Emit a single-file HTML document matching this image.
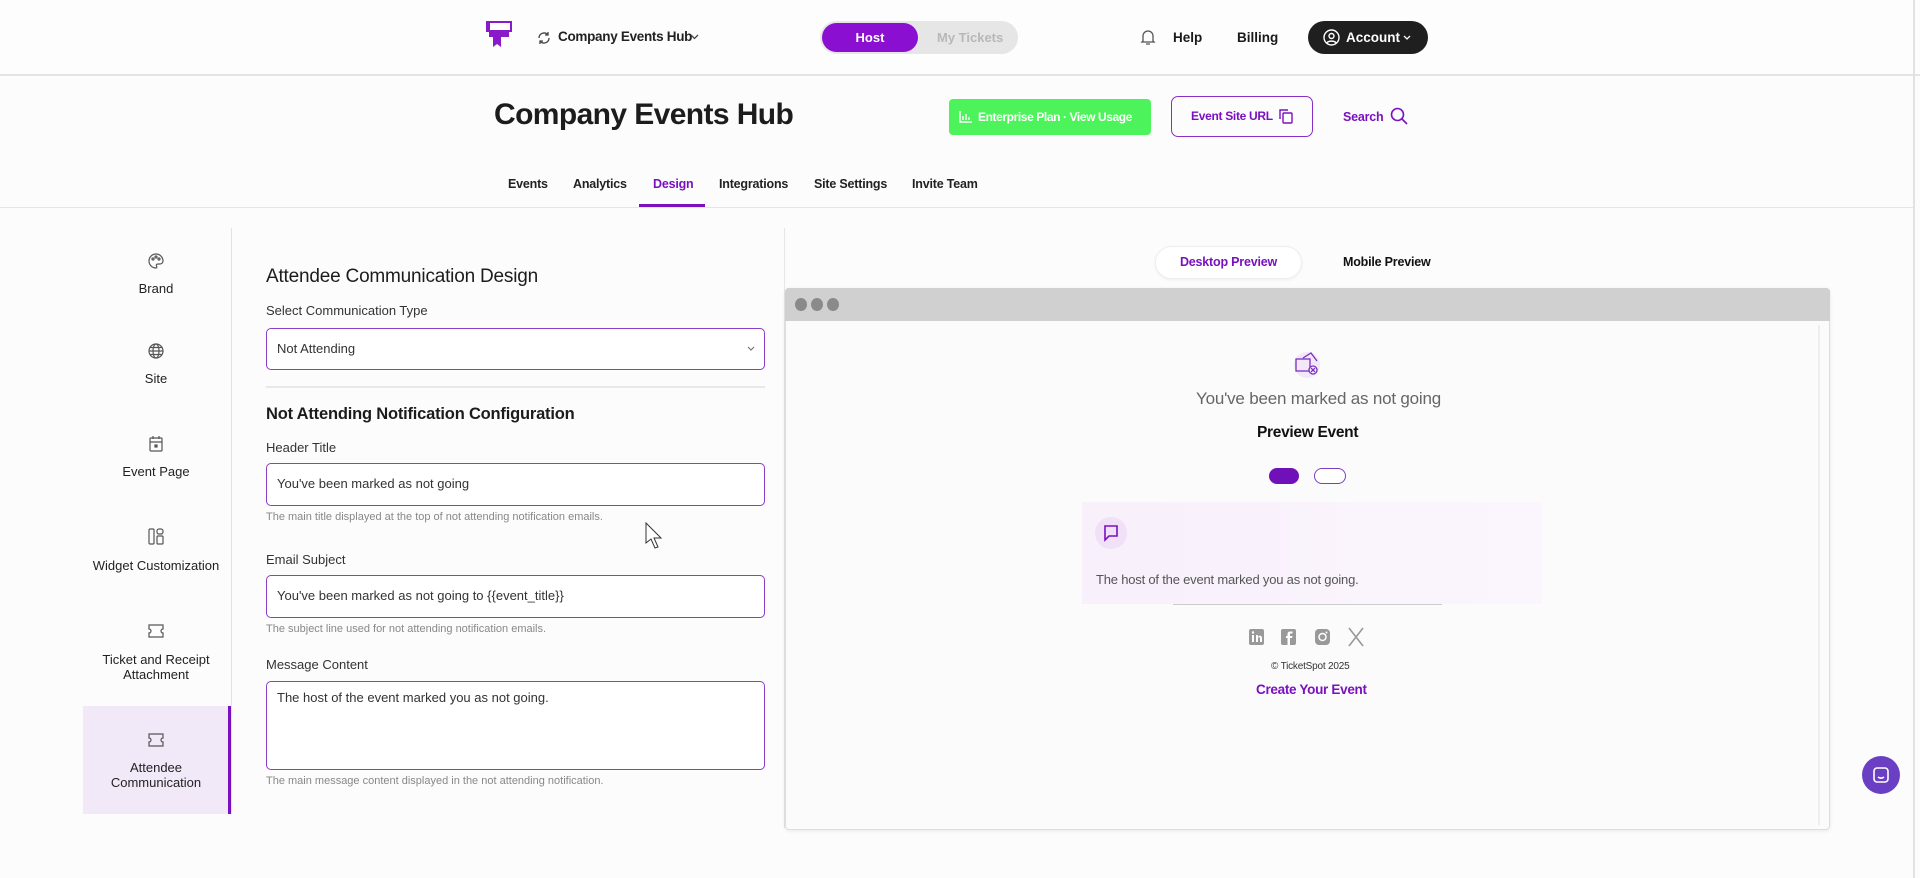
<!DOCTYPE html>
<html><head><meta charset="utf-8"><style>
*{box-sizing:border-box;margin:0;padding:0}
body{width:1920px;height:878px;background:#fcfcfc;font-family:"Liberation Sans",sans-serif;color:#1a1a1a;position:relative;overflow:hidden}
.a{position:absolute}
.t{position:absolute;white-space:nowrap}
.lbl{font-size:13px;color:#333}
.inp{position:absolute;left:266px;width:499px;border:1.5px solid #8a3fc6;border-radius:5px;background:#fff;font-size:14px;color:#333;padding-left:10px}
.help{font-size:11px;color:#888;position:absolute;left:266px}
.side{position:absolute;left:83px;width:146px;text-align:center;font-size:13px;color:#222}
.tab{position:absolute;white-space:nowrap;top:177px;font-size:12.5px;font-weight:bold;color:#222;letter-spacing:-0.2px}
</style></head><body>
<!-- top bar -->
<div class="a" style="left:0;top:0;width:1920px;height:76px;background:#fdfdfd;border-bottom:2px solid #e4e4e4"></div>
<svg class="a" style="left:486px;top:21px" width="26" height="28" viewBox="0 0 26 28"><rect x="1" y="1" width="24" height="9" fill="#fff" stroke="#8a19c9" stroke-width="2"/><rect x="1" y="1" width="3" height="9" fill="#8a19c9"/><path d="M7 10v16l4-3 4 3V10z" fill="#8a19c9"/><rect x="3" y="10" width="20" height="6" fill="#8a19c9"/></svg>
<svg class="a" style="left:537px;top:31px" width="14" height="14" viewBox="0 0 14 14" fill="none" stroke="#444" stroke-width="1.3"><path d="M2 7a5 5 0 0 1 9-3M12 7a5 5 0 0 1-9 3M11 1v3H8M3 13v-3h3"/></svg>
<div class="t" style="left:558px;top:29px;font-size:13.5px;font-weight:bold;color:#222;letter-spacing:-0.3px">Company Events Hub</div>
<svg class="a" style="left:690px;top:34px" width="9" height="6" viewBox="0 0 9 6" fill="none" stroke="#444" stroke-width="1.3"><path d="M1 1l3.5 3.5L8 1"/></svg>
<div class="a" style="left:820px;top:21px;width:198px;height:33px;border-radius:17px;background:#e6e6e6"></div>
<div class="a" style="left:822px;top:23px;width:96px;height:29px;border-radius:15px;background:#8a0fd0;color:#fff;font-size:13px;font-weight:bold;text-align:center;line-height:29px">Host</div>
<div class="t" style="left:937px;top:30px;font-size:13px;font-weight:bold;color:#b8b8b8">My Tickets</div>
<svg class="a" style="left:1140px;top:28px" width="16" height="18" viewBox="0 0 16 18" fill="none" stroke="#555" stroke-width="1.3"><path d="M3 13V8a5 5 0 0 1 10 0v5l1 1H2zM6 16h4"/></svg>
<div class="t" style="left:1173px;top:30px;font-size:13.5px;font-weight:bold">Help</div>
<div class="t" style="left:1237px;top:30px;font-size:13.5px;font-weight:bold">Billing</div>
<div class="a" style="left:1308px;top:21px;width:120px;height:33px;border-radius:17px;background:#1f1f1f;color:#fff;font-size:13.5px;font-weight:bold;line-height:33px;padding-left:38px">Account</div>
<svg class="a" style="left:1403px;top:35px" width="8" height="5" viewBox="0 0 8 5" fill="none" stroke="#fff" stroke-width="1.3"><path d="M1 1l3 3 3-3"/></svg>
<svg class="a" style="left:1323px;top:29px" width="17" height="17" viewBox="0 0 17 17" fill="none" stroke="#fff" stroke-width="1.4"><circle cx="8.5" cy="8.5" r="7.5"/><circle cx="8.5" cy="7" r="2.5"/><path d="M4 14c1-2.5 8-2.5 9 0"/></svg>
<div class="a" style="left:1913px;top:0;width:2px;height:878px;background:#e2e2e2"></div>
<!-- title row -->
<div class="t" style="left:494px;top:98px;font-size:30px;font-weight:bold;color:#1c1c1c;letter-spacing:-0.6px">Company Events Hub</div>
<div class="a" style="left:949px;top:99px;width:202px;height:36px;border-radius:4px;background:#4df35a;color:#fff;font-size:12px;font-weight:bold;line-height:36px;padding-left:29px;letter-spacing:-0.4px;white-space:nowrap">Enterprise Plan · View Usage</div>
<svg class="a" style="left:959px;top:111px" width="13" height="12" viewBox="0 0 13 12" fill="none" stroke="#fff" stroke-width="1.5"><path d="M1 0v11h12M4 9V5M7 9V3M10 9V6"/></svg>
<div class="a" style="left:1171px;top:96px;width:142px;height:41px;border-radius:7px;border:1.5px solid #8a2fc6;color:#7a10c0;font-size:12px;font-weight:bold;line-height:38px;padding-left:19px;letter-spacing:-0.3px;white-space:nowrap">Event Site URL</div>
<svg class="a" style="left:1278px;top:108px" width="15" height="16" viewBox="0 0 15 16" fill="none" stroke="#7a10c0" stroke-width="1.4"><rect x="5" y="5" width="9" height="10" rx="1"/><path d="M2 11V2h8"/></svg>
<div class="t" style="left:1343px;top:110px;font-size:12.5px;font-weight:bold;color:#7a10c0;letter-spacing:-0.2px">Search</div>
<svg class="a" style="left:1390px;top:107px" width="18" height="18" viewBox="0 0 18 18" fill="none" stroke="#7a10c0" stroke-width="1.6"><circle cx="7.5" cy="7.5" r="6"/><path d="M12 12l5 5"/></svg>
<!-- tabs -->
<div class="tab" style="left:508px">Events</div>
<div class="tab" style="left:573px">Analytics</div>
<div class="tab" style="left:653px;color:#7a10c0">Design</div>
<div class="tab" style="left:719px">Integrations</div>
<div class="tab" style="left:814px">Site Settings</div>
<div class="tab" style="left:912px">Invite Team</div>
<div class="a" style="left:0;top:207px;width:1913px;height:1px;background:#e6e6e6"></div>
<div class="a" style="left:639px;top:204px;width:66px;height:3px;background:#7a10c0"></div>
<!-- sidebar -->
<div class="a" style="left:231px;top:228px;width:1px;height:586px;background:#e2e2e2"></div>
<div class="a" style="left:83px;top:706px;width:146px;height:108px;background:#f1e8f8"></div>
<div class="a" style="left:228px;top:706px;width:3px;height:108px;background:#7a10c0"></div>
<svg class="a" style="left:148px;top:253px" width="16" height="16" viewBox="0 0 16 16" fill="none" stroke="#555" stroke-width="1.2"><path d="M8 1a7 7 0 1 0 0 14c1 0 1-1 .5-2s0-2 1.5-2h2a3 3 0 0 0 3-3A7 7 0 0 0 8 1z"/><circle cx="5" cy="6" r="1"/><circle cx="8" cy="4" r="1"/><circle cx="11" cy="6" r="1"/></svg>
<div class="side" style="top:281px">Brand</div>
<svg class="a" style="left:148px;top:343px" width="16" height="16" viewBox="0 0 16 16" fill="none" stroke="#555" stroke-width="1.2"><circle cx="8" cy="8" r="7"/><ellipse cx="8" cy="8" rx="3" ry="7"/><path d="M1 8h14M2 4.5h12M2 11.5h12"/></svg>
<div class="side" style="top:371px">Site</div>
<svg class="a" style="left:149px;top:435px" width="14" height="17" viewBox="0 0 14 17" fill="none" stroke="#555" stroke-width="1.2"><rect x="1" y="3" width="12" height="13" rx="1"/><path d="M4 1v3M10 1v3M1 7h12"/><rect x="6" y="10" width="2" height="2" fill="#555"/></svg>
<div class="side" style="top:464px">Event Page</div>
<svg class="a" style="left:148px;top:528px" width="16" height="17" viewBox="0 0 16 17" fill="none" stroke="#555" stroke-width="1.2"><rect x="1" y="1" width="5" height="15" rx="1"/><rect x="9" y="1" width="6" height="5" rx="2"/><rect x="9" y="8" width="6" height="8" rx="1"/></svg>
<div class="side" style="top:558px">Widget Customization</div>
<svg class="a" style="left:148px;top:624px" width="16" height="14" viewBox="0 0 16 14" fill="none" stroke="#555" stroke-width="1.2"><path d="M1 1h14v4a2 2 0 0 0 0 4v4H1V9a2 2 0 0 0 0-4z"/></svg>
<div class="side" style="top:652px;line-height:15px">Ticket and Receipt<br>Attachment</div>
<svg class="a" style="left:148px;top:733px" width="16" height="14" viewBox="0 0 16 14" fill="none" stroke="#555" stroke-width="1.2"><path d="M1 1h14v4a2 2 0 0 0 0 4v4H1V9a2 2 0 0 0 0-4z"/></svg>
<div class="side" style="top:760px;line-height:15px">Attendee<br>Communication</div>
<!-- form -->
<div class="t" style="left:266px;top:266px;font-size:19px;color:#1c1c1c;letter-spacing:-0.2px">Attendee Communication Design</div>
<div class="t lbl" style="left:266px;top:303px">Select Communication Type</div>
<div class="inp" style="top:328px;height:42px;line-height:39px;font-size:13px">Not Attending</div>
<svg class="a" style="left:747px;top:346px" width="8" height="5" viewBox="0 0 8 5" fill="none" stroke="#777" stroke-width="1.2"><path d="M1 1l3 3 3-3"/></svg>
<div class="a" style="left:266px;top:386px;width:499px;height:2px;background:#e8e8e8"></div>
<div class="t" style="left:266px;top:405px;font-size:16.5px;font-weight:bold;color:#1c1c1c;letter-spacing:-0.2px">Not Attending Notification Configuration</div>
<div class="t lbl" style="left:266px;top:440px">Header Title</div>
<div class="inp" style="top:463px;height:43px;line-height:40px;font-size:13px">You've been marked as not going</div>
<div class="t help" style="top:511px">The main title displayed at the top of not attending notification emails.</div>
<div class="t lbl" style="left:266px;top:552px">Email Subject</div>
<div class="inp" style="top:575px;height:43px;line-height:40px;font-size:13px">You've been marked as not going to {{event_title}}</div>
<div class="t help" style="top:623px">The subject line used for not attending notification emails.</div>
<div class="t lbl" style="left:266px;top:657px">Message Content</div>
<div class="inp" style="top:681px;height:89px;padding-top:8px;font-size:13px">The host of the event marked you as not going.</div>
<div class="t help" style="top:775px">The main message content displayed in the not attending notification.</div>
<svg class="a" style="left:645px;top:522px" width="18" height="28" viewBox="0 0 18 28"><path d="M1 1v20l5-4 4 9 3-1-4-9h7z" fill="#fff" stroke="#333" stroke-width="1"/></svg>
<!-- preview -->
<div class="a" style="left:784px;top:228px;width:1px;height:600px;background:#e6e6e6"></div>
<div class="a" style="left:1155px;top:246px;width:147px;height:33px;border-radius:17px;background:#fff;border:1px solid #eee;box-shadow:0 1px 3px rgba(0,0,0,.06);color:#7a10c0;font-size:12.5px;font-weight:bold;text-align:center;line-height:31px;letter-spacing:-0.2px">Desktop Preview</div>
<div class="t" style="left:1343px;top:255px;font-size:12.5px;font-weight:bold;color:#111;letter-spacing:-0.2px">Mobile Preview</div>
<div class="a" style="left:785px;top:288px;width:1045px;height:542px;background:#fbfbfb;border:1px solid #ddd;border-radius:4px;box-shadow:0 1px 4px rgba(0,0,0,.08)"></div>
<div class="a" style="left:785px;top:288px;width:1045px;height:33px;background:#d0d0d0;border-radius:4px 4px 0 0"></div>
<div class="a" style="left:795px;top:298px;width:12px;height:13px;border-radius:50%;background:#8a8a8a"></div>
<div class="a" style="left:811px;top:298px;width:12px;height:13px;border-radius:50%;background:#8a8a8a"></div>
<div class="a" style="left:827px;top:298px;width:12px;height:13px;border-radius:50%;background:#8a8a8a"></div>
<div class="a" style="left:1818px;top:325px;width:2px;height:500px;background:#eee"></div>
<svg class="a" style="left:1294px;top:350px" width="28" height="30" viewBox="0 0 28 30" fill="none" stroke="#7a2fc0" stroke-width="1.3"><circle cx="13" cy="15" r="13" fill="#f3e8fa" stroke="none"/><rect x="2" y="9" width="14" height="12"/><path d="M9 8l8-5 6 8"/><circle cx="19" cy="20" r="4" fill="#fff"/><path d="M17 18l4 4M21 18l-4 4"/></svg>
<div class="t" style="left:1196px;top:389px;font-size:17px;color:#666;letter-spacing:-0.2px">You've been marked as not going</div>
<div class="t" style="left:1257px;top:424px;font-size:15.5px;font-weight:bold;color:#111;letter-spacing:-0.3px">Preview Event</div>
<div class="a" style="left:1269px;top:468px;width:30px;height:16px;border-radius:8px;background:#7010b8"></div>
<div class="a" style="left:1314px;top:468px;width:32px;height:16px;border-radius:8px;border:1.5px solid #7a3fc0;background:#fff"></div>
<div class="a" style="left:1082px;top:502px;width:460px;height:102px;background:linear-gradient(90deg,#f8f0fb,#fbf6fd)"></div>
<div class="a" style="left:1095px;top:517px;width:32px;height:32px;border-radius:50%;background:#f0e0f8"></div>
<svg class="a" style="left:1103px;top:525px" width="16" height="17" viewBox="0 0 16 17" fill="none" stroke="#7a10c0" stroke-width="1.6"><path d="M2 1h12v10H6l-4 4z"/></svg>
<div class="t" style="left:1096px;top:572px;font-size:13px;color:#555;letter-spacing:-0.2px">The host of the event marked you as not going.</div>
<div class="a" style="left:1173px;top:604px;width:269px;height:1px;background:#ccc"></div>
<svg class="a" style="left:1248px;top:627px" width="120" height="20" viewBox="0 0 120 20" fill="#999"><rect x="1" y="2" width="15" height="16" rx="2"/><rect x="4" y="8" width="2" height="7" fill="#fff"/><circle cx="5" cy="5.5" r="1.2" fill="#fff"/><path d="M8 8h2v2c1-2 4-2 4 1v4h-2v-4c0-1-2-1-2 0v4H8z" fill="#fff"/><rect x="33" y="2" width="15" height="16" rx="2"/><path d="M42 18v-7h2l.5-2H42V7.5c0-1 .5-1 1-1h1.5V4.5H42c-2 0-2.5 1.5-2.5 3V9H38v2h1.5v7z" fill="#fff"/><rect x="67" y="2" width="15" height="16" rx="4"/><circle cx="74.5" cy="10" r="3.5" fill="none" stroke="#fff" stroke-width="1.5"/><circle cx="78.5" cy="5.5" r="1" fill="#fff"/><path d="M101 1l14 18M115 1L101 19" stroke="#999" stroke-width="1.6" fill="none"/></svg>
<div class="t" style="left:1271px;top:661px;font-size:10px;color:#333;letter-spacing:-0.2px">© TicketSpot 2025</div>
<div class="t" style="left:1256px;top:682px;font-size:13.5px;font-weight:bold;color:#7a10c0;letter-spacing:-0.3px">Create Your Event</div>
<div class="a" style="left:1862px;top:756px;width:38px;height:38px;border-radius:50%;background:#6a3fc4"></div>
<svg class="a" style="left:1872px;top:766px" width="18" height="18" viewBox="0 0 18 18" fill="none" stroke="#fff" stroke-width="1.6"><rect x="2" y="2" width="14" height="14" rx="3"/><path d="M6 11c2 1.5 4 1.5 6 0"/></svg>
</body></html>
